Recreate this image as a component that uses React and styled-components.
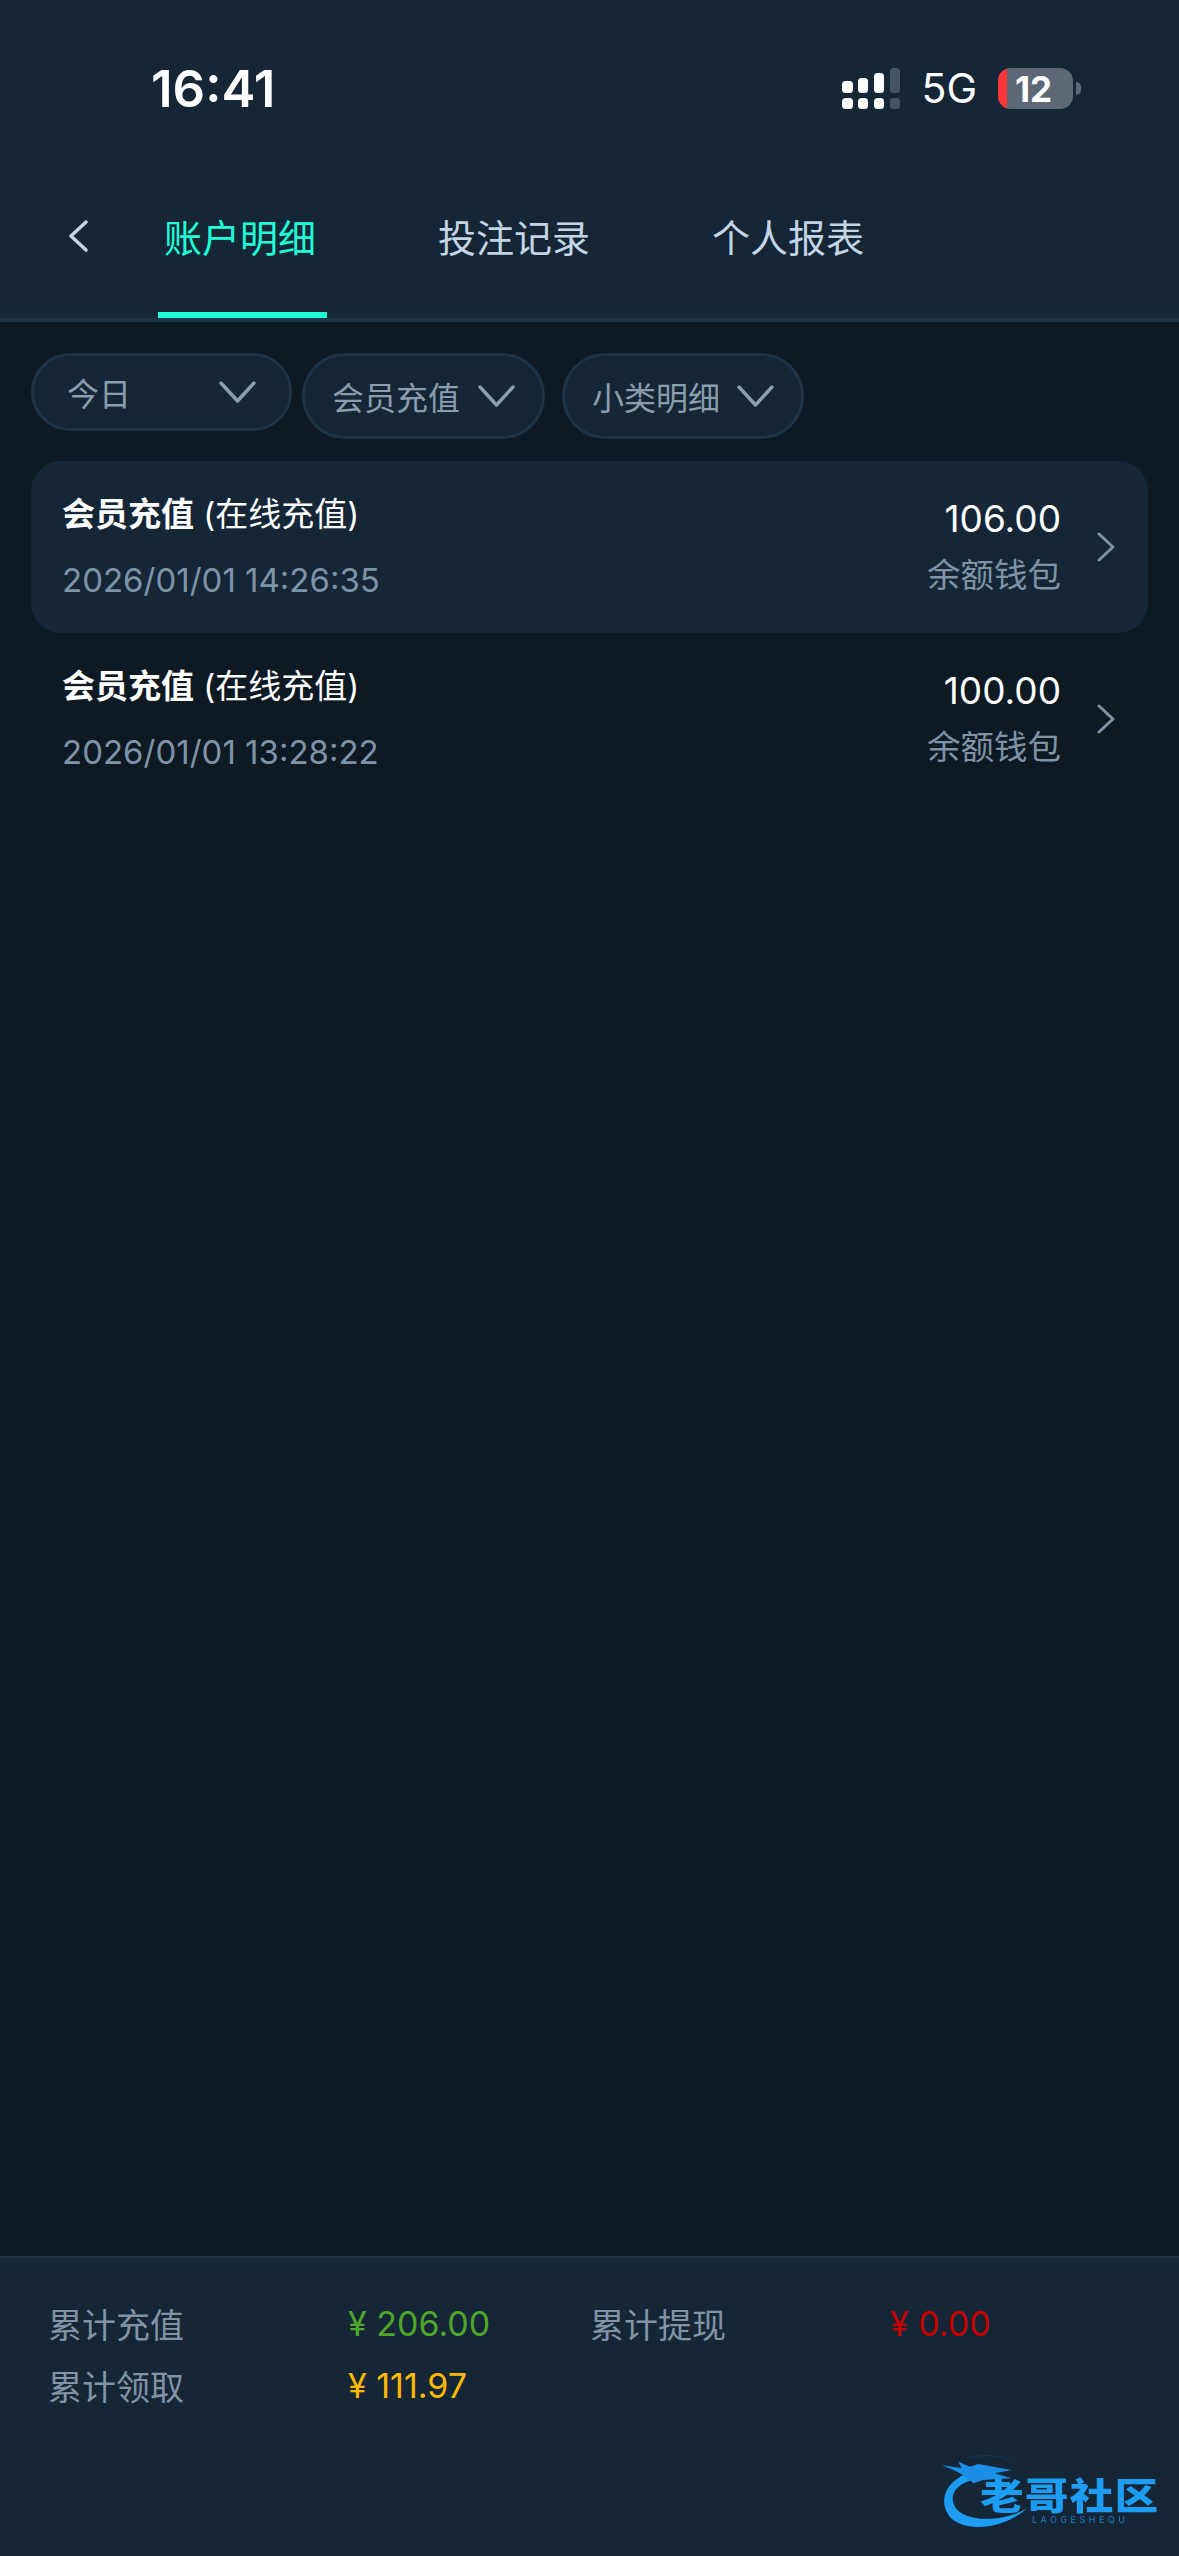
import React from 'react';
import styled, {createGlobalStyle} from 'styled-components';

const FONT = `Inter, "Noto Sans CJK SC", sans-serif`;

const GlobalStyle = createGlobalStyle`
  html, body {
    margin: 0;
    padding: 0;
    background: #0d1923;
  }
  body {
    font-family: ${FONT};
  }
  * {
    box-sizing: border-box;
  }
`;

const Page = styled.div`
  position: relative;
  display: flex;
  flex-direction: column;
  width: 1179px;
  height: 2556px;
  overflow: hidden;
  background: #0d1923;
`;

const Header = styled.header`
  background: #152636;
  border-bottom: 4px solid #1c3348;
`;

const StatusBar = styled.div`
  display: flex;
  align-items: center;
  justify-content: space-between;
  height: 177px;
  padding: 0 98px 0 151px;
`;

const Time = styled.span`
  font-size: 51px;
  font-weight: 600;
  color: #fff;
`;

const StatusRight = styled.div`
  display: flex;
  align-items: center;
  gap: 21px;
`;

const Network = styled.span`
  font-size: 41px;
  line-height: 41px;
  color: #fff;
`;

const BatteryWrap = styled.div`
  display: flex;
  align-items: center;
  gap: 3px;
`;

const Battery = styled.div`
  position: relative;
  display: flex;
  align-items: center;
  justify-content: center;
  width: 75px;
  height: 41px;
  padding-right: 4px;
  border-radius: 13px;
  overflow: hidden;
  background: #5c6875;
  font-size: 35px;
  font-weight: 700;
  color: #fff;
  &::before {
    content: '';
    position: absolute;
    left: 0;
    top: 0;
    bottom: 0;
    width: 9px;
    background: #ff3538;
  }
`;

const BatteryNub = styled.span`
  width: 5px;
  height: 13px;
  border-radius: 0 6px 6px 0;
  background: #5c6875;
`;

const TabBar = styled.nav`
  display: flex;
  align-items: stretch;
  height: 141px;
`;

const BackButton = styled.div`
  display: flex;
  align-items: center;
  width: 158px;
  padding: 0 0 24px 68px;
`;

const Tab = styled.div`
  display: flex;
  align-items: center;
  width: 169px;
  margin-right: 105px;
  padding: 0 0 18px 6px;
  font-size: 38px;
  white-space: nowrap;
  color: ${p => (p.$active ? '#1effd8' : '#c3d5e5')};
  border-bottom: 6px solid ${p => (p.$active ? '#1effd8' : 'transparent')};
`;

const Filters = styled.div`
  display: flex;
  align-items: flex-start;
  padding: 31px 31px 22px;
`;

const Chip = styled.div`
  display: flex;
  align-items: center;
  justify-content: space-between;
  width: ${p => p.$width}px;
  height: ${p => (p.$short ? 78 : 86)}px;
  margin-right: ${p => p.$gap}px;
  padding: ${p => (p.$short ? '0 33px 0 33px' : '0 27px 0 27px')};
  background: #152636;
  border: 3px solid #1c3348;
  border-radius: 43px;
  font-size: 32px;
  color: #8a9eae;
`;

const List = styled.main`
  flex: 1;
  padding: 0 31px;
`;

const Row = styled.div`
  display: flex;
  align-items: center;
  height: 172px;
  padding: 0 33px 0 31px;
  border-radius: 30px;
  background: ${p => (p.$selected ? '#152636' : 'transparent')};
`;

const RowLeft = styled.div`
  display: flex;
  flex: 1;
  flex-direction: column;
  gap: 22px;
`;

const Title = styled.div`
  font-size: 33px;
  line-height: 44px;
  color: #fff;
  b {
    font-weight: 700;
  }
`;

const DateText = styled.div`
  font-size: 33px;
  line-height: 44px;
  color: #7d94a8;
`;

const RowRight = styled.div`
  display: flex;
  flex-direction: column;
  align-items: flex-end;
  gap: 10px;
  margin-right: 36px;
`;

const Amount = styled.div`
  font-size: 37px;
  line-height: 46px;
  color: #fff;
`;

const Wallet = styled.div`
  font-size: 33.5px;
  line-height: 46px;
  color: #7e94a6;
`;

const Footer = styled.footer`
  display: grid;
  grid-template-columns: 300px 242px 300px 1fr;
  grid-auto-rows: 62px;
  align-items: center;
  height: 300px;
  padding: 34px 0 0 48px;
  background: #152636;
  border-top: 2px solid #1c3348;
  font-size: 34px;
`;

const SumLabel = styled.span`
  color: #8094a5;
`;

const SumValue = styled.span`
  color: ${p => p.$color};
`;

const Logo = styled.div`
  position: absolute;
  right: 0;
  bottom: 0;
  width: 259px;
  height: 116px;
  filter: blur(0.5px);
`;

const LogoName = styled.span`
  position: absolute;
  left: 60px;
  top: 33px;
  width: 150px;
  font-size: 37px;
  line-height: 48px;
  font-weight: 900;
  white-space: nowrap;
  letter-spacing: 1px;
  color: #1c9cf2;
  transform: scaleX(1.18);
  transform-origin: left center;
`;

const LogoSub = styled.span`
  position: absolute;
  left: 112px;
  top: 75px;
  font-size: 9px;
  line-height: 10px;
  letter-spacing: 3.5px;
  white-space: nowrap;
  color: #1a7fcc;
`;

function Chevron({width, height, color, strokeWidth = 3, points}) {
    return (
        <svg width={width} height={height} viewBox={`0 0 ${width} ${height}`} fill="none">
            <polyline points={points} stroke={color} strokeWidth={strokeWidth} strokeLinecap="round" strokeLinejoin="round"/>
        </svg>
    );
}

function Down() {
    return <Chevron width={37} height={22} color="#8a9eae" strokeWidth={3.5} points="2,2 18.5,20 35,2"/>;
}

function SignalIcon() {
    const bars = [
        {x: 0, w: 11, top: 13, on: true},
        {x: 16, w: 10, top: 10, on: true},
        {x: 32, w: 10, top: 5, on: true},
        {x: 48, w: 10, top: 0, on: false},
    ];
    return (
        <svg width="58" height="41" viewBox="0 0 58 41">
            {bars.map(b => (
                <g key={b.x} fill={b.on ? '#fff' : '#465563'}>
                    <rect x={b.x} y={b.top} width={b.w} height={25 - b.top} rx="3.5"/>
                    <rect x={b.x} y="30" width={b.w} height="11" rx="3.5"/>
                </g>
            ))}
        </svg>
    );
}

function LogoMark() {
    return (
        <svg width="259" height="116" viewBox="0 0 777 348" style={{position: 'absolute', left: 0, top: 0}}>
            <path d="M130 105 C80 130 60 175 80 215 C105 275 235 280 322 205 C240 250 130 245 105 200 C85 165 110 130 160 120 Z" fill="#1c9cf2"/>
            <path d="M65 75 L125 85 L115 65 L150 80 L175 72 L275 90 L225 100 L275 115 L190 120 L160 130 C140 105 100 90 65 75 Z" fill="#1a8fe6"/>
            <path d="M140 55 C190 40 270 45 280 75" stroke="#123c5c" strokeWidth="3" fill="none"/>
        </svg>
    );
}

const RECORDS = [
    {date: '2026/01/01 14:26:35', amount: '106.00', selected: true},
    {date: '2026/01/01 13:28:22', amount: '100.00'},
];

function App() {
    return (
        <Page>
            <GlobalStyle/>
            <Header>
                <StatusBar>
                    <Time>16:41</Time>
                    <StatusRight>
                        <SignalIcon/>
                        <Network>5G</Network>
                        <BatteryWrap>
                            <Battery>12</Battery>
                            <BatteryNub/>
                        </BatteryWrap>
                    </StatusRight>
                </StatusBar>
                <TabBar>
                    <BackButton>
                        <Chevron width={20} height={32} color="#c3d5e5" strokeWidth={3.5} points="18,2 3,16 18,30"/>
                    </BackButton>
                    <Tab $active>账户明细</Tab>
                    <Tab>投注记录</Tab>
                    <Tab>个人报表</Tab>
                </TabBar>
            </Header>

            <Filters>
                <Chip $short $width={261} $gap={10}>今日<Down/></Chip>
                <Chip $width={243} $gap={17}>会员充值<Down/></Chip>
                <Chip $width={242} $gap={0}>小类明细<Down/></Chip>
            </Filters>

            <List>
                {RECORDS.map(r => (
                    <Row key={r.date} $selected={r.selected}>
                        <RowLeft>
                            <Title><b>会员充值</b> (在线充值)</Title>
                            <DateText>{r.date}</DateText>
                        </RowLeft>
                        <RowRight>
                            <Amount>{r.amount}</Amount>
                            <Wallet>余额钱包</Wallet>
                        </RowRight>
                        <Chevron width={18} height={30} color="#7e94a6" points="2,2 16,15 2,28"/>
                    </Row>
                ))}
            </List>

            <Footer>
                <SumLabel>累计充值</SumLabel>
                <SumValue $color="#4ea72a">¥ 206.00</SumValue>
                <SumLabel>累计提现</SumLabel>
                <SumValue $color="#c80000">¥ 0.00</SumValue>
                <SumLabel>累计领取</SumLabel>
                <SumValue $color="#fdb900">¥ 111.97</SumValue>
            </Footer>

            <Logo>
                <LogoMark/>
                <LogoName>老哥社区</LogoName>
                <LogoSub>LAOGESHEQU</LogoSub>
            </Logo>
        </Page>
    );
}

export default App;
